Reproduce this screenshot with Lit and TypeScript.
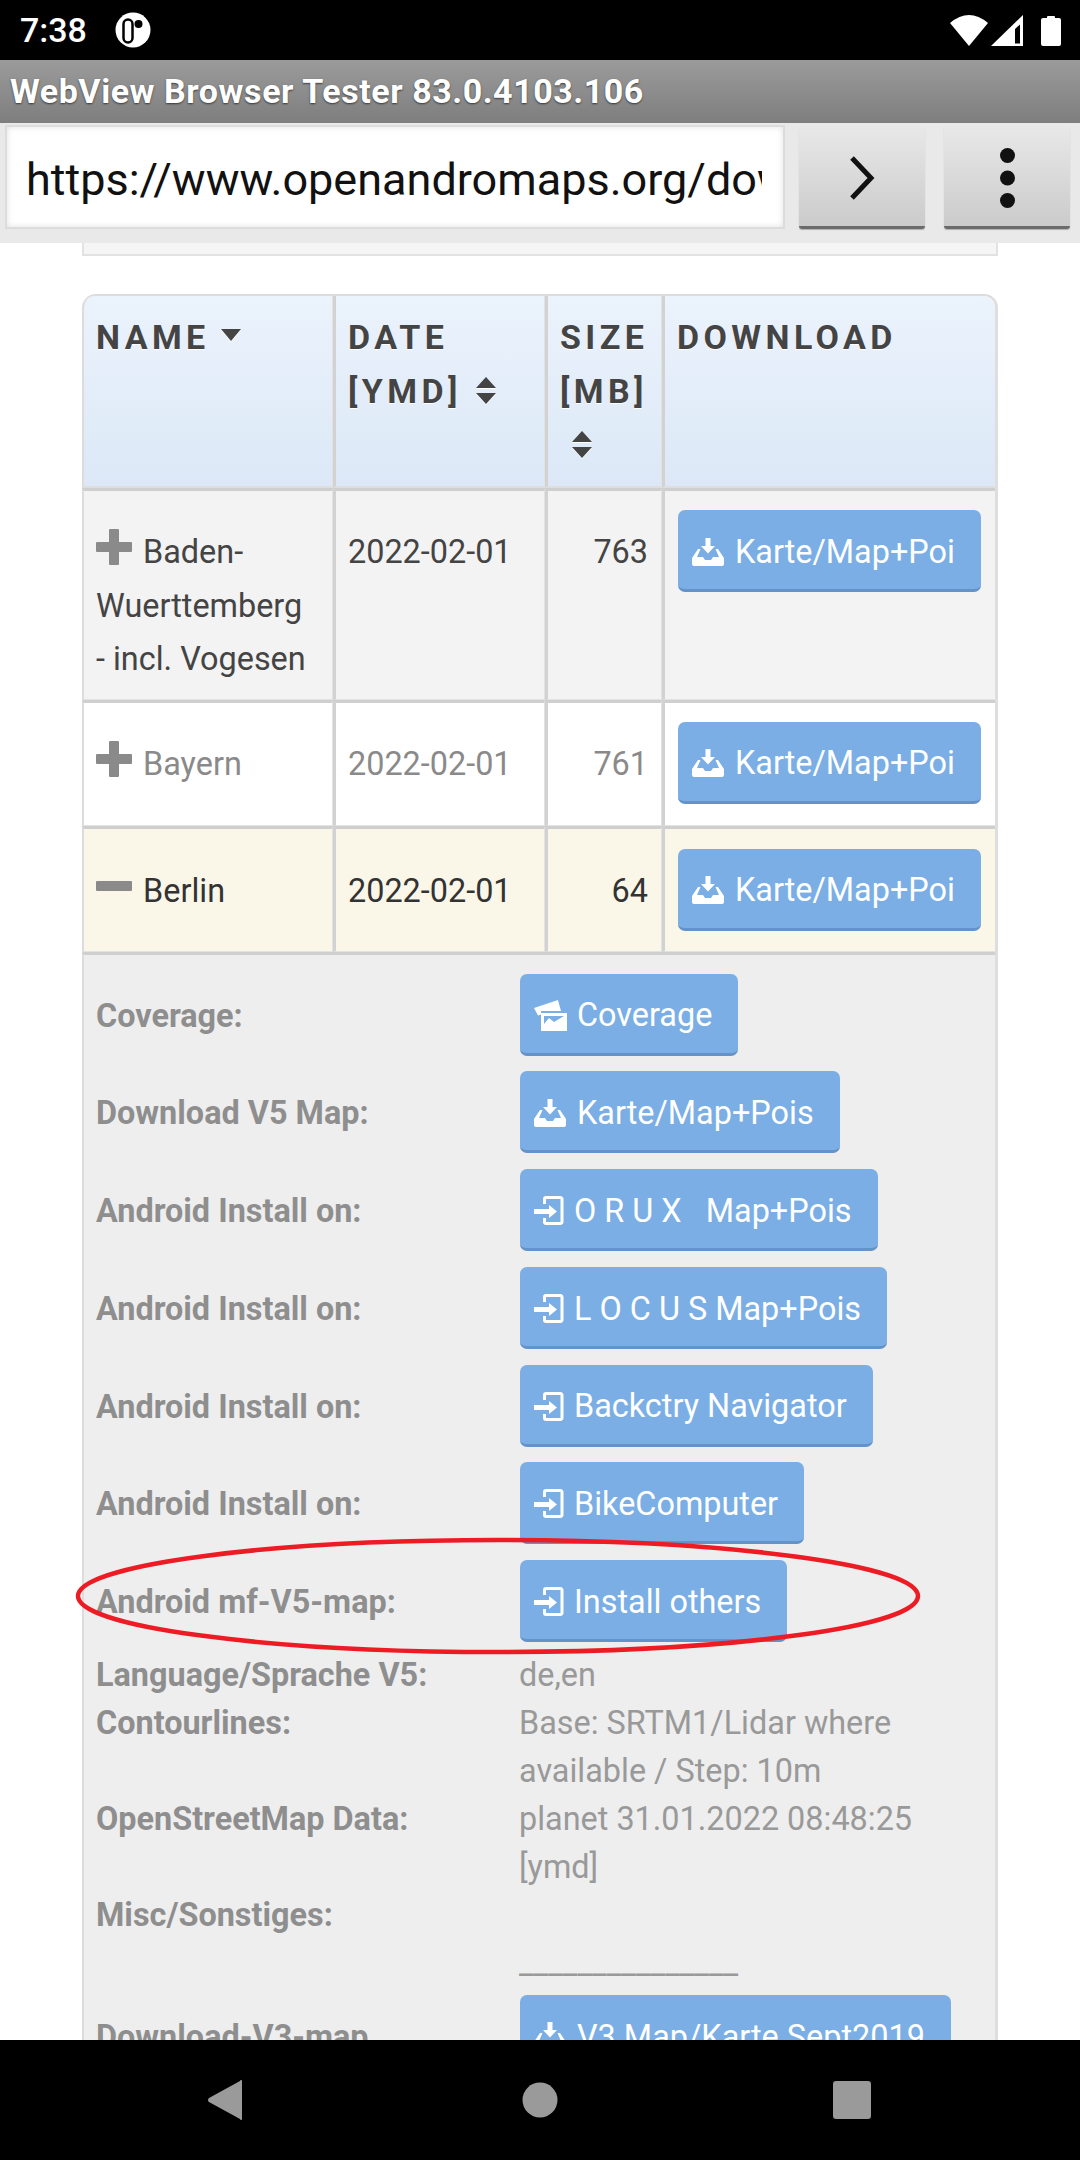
import { LitElement, html, css, svg, nothing } from 'lit';
import { customElement } from 'lit/decorators.js';

type IconName = 'download' | 'signin' | 'coverage';

const downloadIcon = svg`<path d="M13.500 0H18.500V8H23L16 15.500L9 8H13.500Z"/><path d="M6 11H8.500L5 19H11L13 22H19L21 19H27L23.500 11H26L32 20V26a2 2 0 0 1-2 2H2a2 2 0 0 1-2-2V20Z"/>`;
const signinIcon = svg`<path d="M0 13H15V9L23 15.500L15 22V18H0Z"/><path d="M10.500 8V3a1.500 1.500 0 0 1 1.500-1.500H26.500a1.500 1.500 0 0 1 1.500 1.500V26a1.500 1.500 0 0 1-1.500 1.500H12a1.500 1.500 0 0 1-1.500-1.500V22" fill="none" stroke="#fff" stroke-width="3"/>`;
const coverageIcon = svg`<path d="M0 8L24 0L27 11H7V14.500L4 15.500Z"/><path fill-rule="evenodd" d="M7 13H33V31H7ZM10 16V28H30V16Z"/><path d="M10 28V24L15 18L20 22L30 16V28Z"/>`;

const icons: Record<IconName, { box: string; width: number; height: number; body: unknown }> = {
  download: { box: '0 0 32 28', width: 32, height: 28, body: downloadIcon },
  signin: { box: '0 0 30 29', width: 30, height: 29, body: signinIcon },
  coverage: { box: '0 0 33 31', width: 33, height: 31, body: coverageIcon },
};

const rows = [
  { name: 'Baden-Wuerttemberg - incl. Vogesen', date: '2022-02-01', size: '763', kind: 'odd', open: false },
  { name: 'Bayern', date: '2022-02-01', size: '761', kind: 'even', open: false },
  { name: 'Berlin', date: '2022-02-01', size: '64', kind: 'active', open: true },
];

const installRows = [
  { label: 'Coverage:', text: 'Coverage', icon: 'coverage' as IconName },
  { label: 'Download V5 Map:', text: 'Karte/Map+Pois', icon: 'download' as IconName },
  { label: 'Android Install on:', text: 'O R U X \u00a0 Map+Pois', icon: 'signin' as IconName },
  { label: 'Android Install on:', text: 'L O C U S Map+Pois', icon: 'signin' as IconName },
  { label: 'Android Install on:', text: 'Backctry Navigator', icon: 'signin' as IconName },
  { label: 'Android Install on:', text: 'BikeComputer', icon: 'signin' as IconName },
  { label: 'Android mf-V5-map:', text: 'Install others', icon: 'signin' as IconName },
];

const infoRows = [
  { label: 'Language/Sprache V5:', lines: ['de,en'] },
  { label: 'Contourlines:', lines: ['Base: SRTM1/Lidar where available / Step: 10m'] },
  { label: 'OpenStreetMap Data:', lines: ['planet 31.01.2022 08:48:25 [ymd]'] },
  { label: 'Misc/Sonstiges:', lines: ['\u00a0', '_______________'] },
];

@customElement('app-root')
export class AppRoot extends LitElement {
  renderButton(text: string, icon: IconName) {
    const ic = icons[icon];
    return html`<a class="btn">
      <svg class="btn-icon ${icon}" viewBox=${ic.box} width=${ic.width} height=${ic.height} fill="#fff">${ic.body}</svg>
      <span>${text}</span>
    </a>`;
  }

  renderSort(both: boolean) {
    return both
      ? html`<svg class="sort" viewBox="0 0 20 27" width="20" height="27"><path d="M10 0L20 11H0Z"/><path d="M0 16H20L10 27Z"/></svg>`
      : html`<svg class="sort caret" viewBox="0 0 20 12" width="20" height="12"><path d="M0 0H20L10 12Z"/></svg>`;
  }

  renderStatusBar() {
    return html`<div class="status">
      <span class="clock">7:38</span>
      <svg class="dns" viewBox="0 0 36 36" width="36" height="36">
        <circle cx="18" cy="18" r="17.500" fill="#fff"/>
        <rect x="8.500" y="7.500" width="9" height="23" rx="4.500" fill="none" stroke="#000" stroke-width="2.500"/>
        <circle cx="23.500" cy="12" r="4" fill="#000"/>
      </svg>
      <span class="status-gap"></span>
      <svg viewBox="0 0 38 32" width="38" height="32" fill="#fff"><path d="M0 9Q19 -7 38 9L19 32Z"/></svg>
      <svg class="signal" viewBox="0 0 32 31" width="32" height="31">
        <path fill="#fff" d="M0 31L32 0V31Z"/>
        <path d="M24 14L29 9.500V28.500H24Z" fill="#000"/>
      </svg>
      <svg class="battery" viewBox="0 0 20 31" width="20" height="31" fill="#fff"><path d="M6 2a1 1 0 0 1 1-1H13a1 1 0 0 1 1 1V3H18a2 2 0 0 1 2 2V29a2 2 0 0 1-2 2H2a2 2 0 0 1-2-2V5a2 2 0 0 1 2-2H6Z"/></svg>
    </div>`;
  }

  renderToolbar() {
    return html`<div class="titlebar">WebView Browser Tester 83.0.4103.106</div>
      <div class="toolbar">
        <div class="url"><span>https://www.openandromaps.org/download</span></div>
        <button class="tool">
          <svg viewBox="0 0 26 44" width="26" height="44"><path d="M3 2L22 22L3 42" fill="none" stroke="#111" stroke-width="5"/></svg>
        </button>
        <button class="tool">
          <svg viewBox="0 0 15 60" width="15" height="60" fill="#111"><circle cx="7.500" cy="7.500" r="7.500"/><circle cx="7.500" cy="30" r="7.500"/><circle cx="7.500" cy="52.500" r="7.500"/></svg>
        </button>
      </div>`;
  }

  renderDetail() {
    return html`<tr>
      <td colspan="4" class="detail">
        <div class="detail-grid">
          ${installRows.map(
            (r, i) => html`<div class="d-label center">${r.label}</div>
              <div class=${i === installRows.length - 1 ? 'd-btn tail' : 'd-btn'}>${this.renderButton(r.text, r.icon)}</div>`,
          )}
          ${infoRows.map(
            (r, i) => html`<div class="d-label">${r.label}</div>
              <div class=${i === infoRows.length - 1 ? 'd-value spaced' : 'd-value'}>${r.lines.map((l) => html`<div>${l}</div>`)}</div>`,
          )}
          <div class="d-label center">Download-V3-map</div>
          <div class="d-btn">${this.renderButton('V3 Map/Karte Sept2019', 'download')}</div>
        </div>
      </td>
    </tr>`;
  }

  render() {
    return html`
      ${this.renderStatusBar()}
      ${this.renderToolbar()}
      <main class="page">
        <div class="prev-block"></div>
        <table class="maps">
          <colgroup><col class="c1" /><col class="c2" /><col class="c3" /><col class="c4" /></colgroup>
          <thead>
            <tr>
              <th>NAME ${this.renderSort(false)}</th>
              <th>DATE [YMD] ${this.renderSort(true)}</th>
              <th class="size">SIZE [MB] ${this.renderSort(true)}</th>
              <th>DOWNLOAD</th>
            </tr>
          </thead>
          <tbody>
            ${rows.map(
              (r) => html`<tr class=${r.kind}>
                  <td class="name">
                    <svg class="toggle" viewBox="0 0 36 36" width="36" height="36" fill="#8a8a8a">
                      <rect x="0" y="13" width="36" height="10" rx="1"></rect>
                      ${r.open ? nothing : svg`<rect x="13" y="0" width="10" height="36" rx="1"></rect>`}
                    </svg>
                    ${r.name}
                  </td>
                  <td>${r.date}</td>
                  <td class="num">${r.size}</td>
                  <td class="action">${this.renderButton('Karte/Map+Poi', 'download')}</td>
                </tr>
                ${r.open ? this.renderDetail() : nothing}`,
            )}
          </tbody>
        </table>
      </main>
      <nav class="nav">
        <svg viewBox="0 0 34 40" width="34" height="40" fill="#9a9a9a"><path d="M34 1V39a1 1 0 0 1-2 0L1 22a2.500 2.500 0 0 1 0-4L32 1a1 1 0 0 1 2 0Z"/></svg>
        <svg viewBox="0 0 36 36" width="36" height="36" fill="#9a9a9a"><circle cx="18" cy="18" r="17.500"/></svg>
        <svg viewBox="0 0 38 38" width="38" height="38" fill="#9a9a9a"><rect width="38" height="38" rx="3"/></svg>
      </nav>
      <svg class="mark" viewBox="0 0 846 118" width="846" height="118">
        <ellipse cx="423" cy="59" rx="420" ry="56" fill="none" stroke="#ed1c24" stroke-width="4.500"/>
      </svg>
    `;
  }

  static styles = css`
    :host {
      display: flex;
      flex-direction: column;
      position: relative;
      height: 2160px;
      overflow: hidden;
      background: #fff;
      font-family: Roboto, 'Liberation Sans', sans-serif;
      font-size: 32.4px;
      line-height: 53.5px;
      color: #444;
    }

    .status {
      display: flex;
      align-items: center;
      height: 60px;
      flex: none;
      background: #000;
      color: #fff;
      padding: 0 19px 0 20px;
      box-sizing: border-box;
    }

    .clock {
      font-size: 34px;
      font-weight: 500;
      line-height: 60px;
    }

    .dns {
      margin-left: 28px;
    }

    .status-gap {
      flex: 1;
    }

    .signal {
      margin-left: 3px;
    }

    .battery {
      margin-left: 18px;
    }

    .titlebar {
      flex: none;
      height: 63px;
      line-height: 63px;
      padding-left: 10px;
      background: linear-gradient(#9b9b9b, #7e7e7e);
      color: #fff;
      font-size: 34px;
      font-weight: 700;
      letter-spacing: 0.55px;
      text-shadow: 0 1px 2px rgba(0, 0, 0, 0.6);
    }

    .toolbar {
      flex: none;
      display: flex;
      gap: 14px;
      height: 120px;
      box-sizing: border-box;
      padding: 2px 10px 0 5px;
      background: #e9e9e9;
    }

    .url {
      width: 780px;
      height: 104px;
      box-sizing: border-box;
      padding-left: 19px;
      padding-right: 21px;
      background: #fff;
      border: 2px solid #dcdcdc;
      box-shadow: inset 0 0 6px rgba(0, 0, 0, 0.12);
      font-size: 45px;
      line-height: 100px;
      color: #111;
      white-space: nowrap;
    }

    .url span {
      display: block;
      overflow: hidden;
      padding-top: 3px;
      height: 97px;
    }

    .tool {
      display: flex;
      align-items: center;
      justify-content: center;
      width: 126px;
      height: 102px;
      box-sizing: border-box;
      margin-top: 2px;
      padding: 3px 0 0;
      border: 0;
      border-bottom: 3px solid #6b6b6b;
      border-radius: 3px;
      background: linear-gradient(#e8e8e8, #cbcbcb);
      box-shadow: 0 1px 1px rgba(0, 0, 0, 0.25);
    }

    .tool:last-child {
      margin-left: 5px;
    }

    .page {
      flex: 1;
      min-height: 0;
      overflow: hidden;
      padding: 0 82px;
    }

    .prev-block {
      height: 13px;
      box-sizing: border-box;
      background: #f5f5f5;
      border: 2px solid #e2e2e2;
      border-top: 0;
    }

    .maps {
      width: 916px;
      margin-top: 38px;
      table-layout: fixed;
      border-collapse: separate;
      border-spacing: 0;
      border-top: 2px solid #dcdcdc;
      border-right: 3px solid #dedede;
      border-radius: 14px 14px 0 0;
    }

    .c1 {
      width: 251px;
    }

    .c2 {
      width: 212px;
    }

    .c3 {
      width: 117px;
    }

    th {
      height: 192px;
      box-sizing: border-box;
      padding: 14px 8px 0 12px;
      vertical-align: top;
      text-align: left;
      font-weight: 700;
      font-size: 34px;
      line-height: 54px;
      letter-spacing: 4.4px;
      background: linear-gradient(#ebf3fc, #dce8f7);
      border-left: 3px solid #d2d2d2;
      border-right: 1px solid #e2e2e2;
      border-bottom: 2px solid #dedede;
      text-shadow: 0 1px 0 #fff;
    }

    th:first-child {
      border-left: 2px solid #dcdcdc;
      border-top-left-radius: 12px;
    }

    th:last-child {
      border-top-right-radius: 12px;
      border-right: 0;
    }

    .sort {
      fill: #444;
      margin-left: 1px;
      filter: drop-shadow(0 1px 0 #fff);
      vertical-align: -1px;
    }

    .caret {
      vertical-align: 8px;
      margin-left: -1px;
    }

    .size .sort {
      margin-left: 12px;
    }

    td {
      box-sizing: border-box;
      padding: 35px 13px 12px 12px;
      vertical-align: top;
      border-top: 3px solid #cfcfcf;
      border-left: 3px solid #d2d2d2;
      border-right: 1px solid #e2e2e2;
      border-bottom: 1px solid #e2e2e2;
    }

    td:first-child {
      border-left: 2px solid #dcdcdc;
      padding-left: 12px;
    }

    td:last-child {
      border-right: 0;
    }

    .num {
      text-align: right;
    }

    .action {
      padding: 19px 0 21px 13px;
    }

    .odd td {
      background: #f3f3f3;
    }

    .even td {
      background: #fff;
      color: #8a8a8a;
    }

    .active td {
      background: #faf7e9;
      color: #333;
      padding-top: 36px;
    }

    .active td.action {
      padding-top: 20px;
      padding-bottom: 20px;
    }

    .toggle {
      margin-right: 3px;
      vertical-align: -2px;
    }

    td.detail {
      padding: 19px 0 0 12px;
      background: #eee;
      border-bottom: 0;
    }

    .detail-grid {
      display: grid;
      grid-template-columns: 424px 1fr;
      color: #8e8e8e;
      line-height: 48px;
    }

    .d-label {
      font-weight: 700;
      color: #8e8e8e;
    }

    .d-label.center {
      line-height: 85px;
    }

    .d-btn {
      padding-bottom: 15.8px;
    }

    .d-btn.tail {
      padding-bottom: 8.5px;
    }

    .d-value {
      margin-left: -1px;
      padding-right: 30px;
      color: #999;
    }

    .d-value.spaced {
      padding-bottom: 8px;
    }

    .btn {
      display: inline-flex;
      align-items: center;
      height: 82px;
      box-sizing: border-box;
      padding: 4px 26px 0 14px;
      gap: 10px;
      border-bottom: 3px solid #6393c9;
      border-radius: 7px;
      background: #7aaee5;
      color: #fff;
      line-height: 1;
      white-space: nowrap;
      vertical-align: top;
    }

    .btn span {
      padding-top: 1px;
    }

    .btn-icon {
      flex: none;
    }

    .btn-icon.download {
      margin-right: 1px;
    }

    .nav {
      flex: none;
      height: 120px;
      background: #000;
      display: grid;
      grid-template-columns: 208px 34px 280px 36px 275px 38px;
      align-items: center;
    }

    .nav svg:nth-child(1) {
      grid-column: 2;
    }

    .nav svg:nth-child(2) {
      grid-column: 4;
    }

    .nav svg:nth-child(3) {
      grid-column: 6;
    }

    .mark {
      position: absolute;
      left: 75px;
      top: 1537px;
      pointer-events: none;
    }
  `;
}
